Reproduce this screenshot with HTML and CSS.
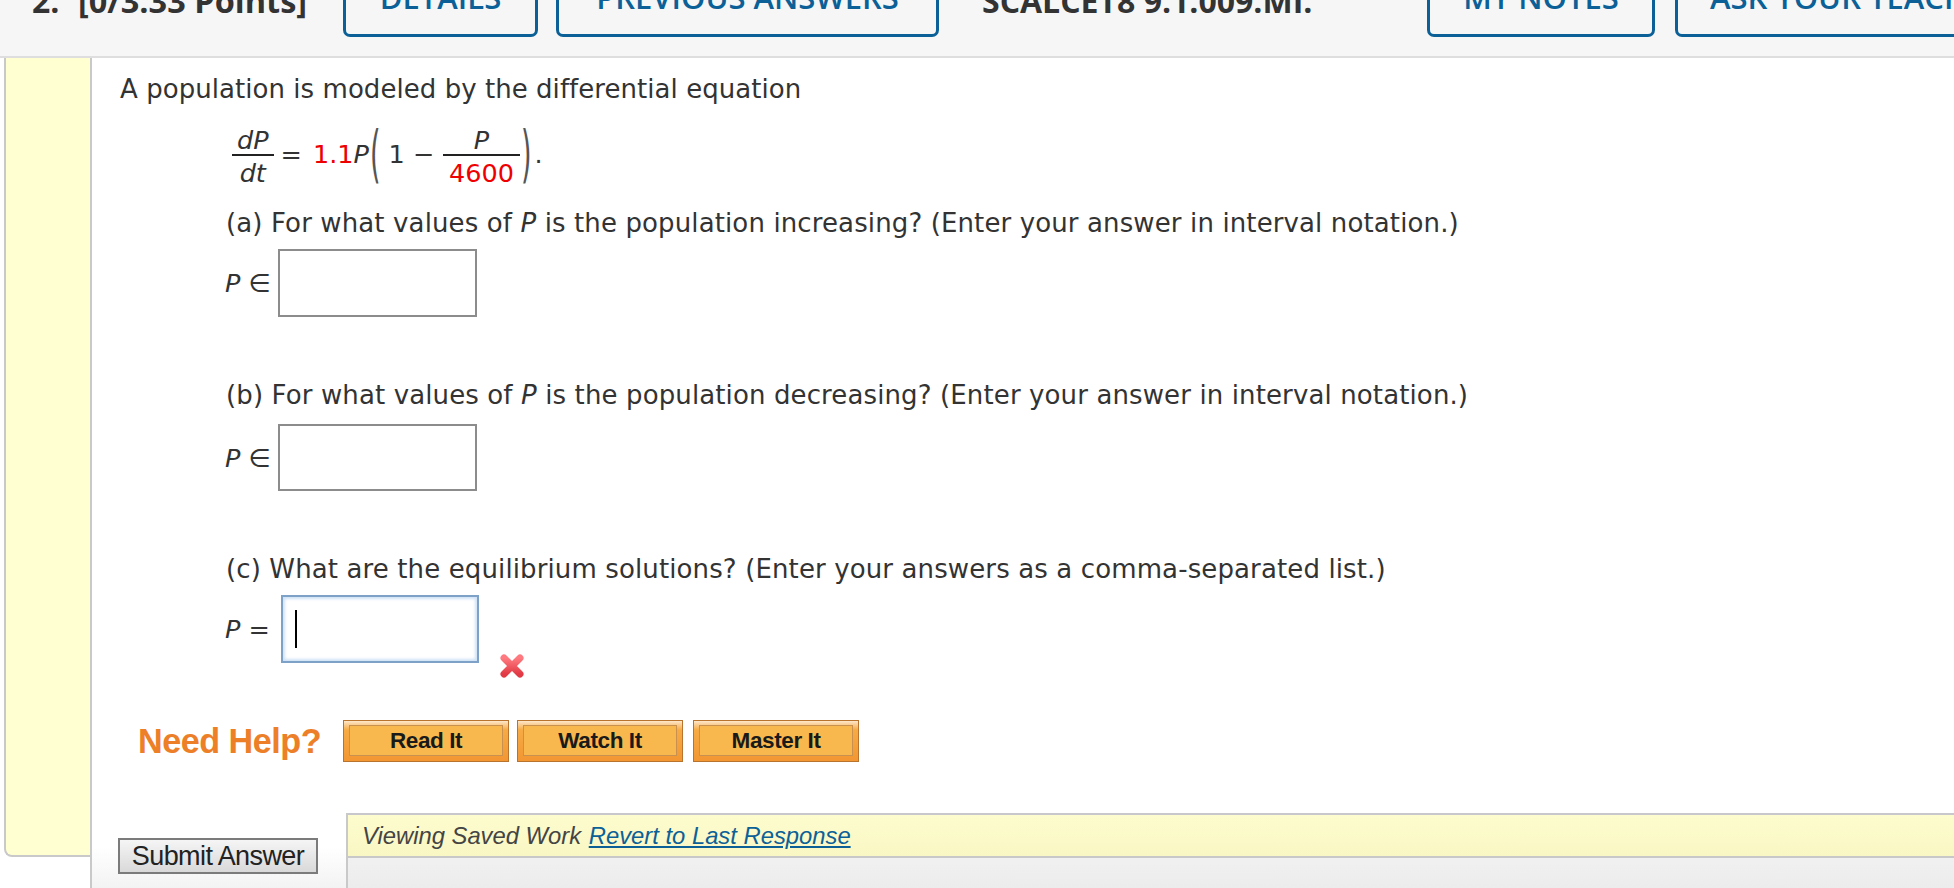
FILE: index.html
```html
<!DOCTYPE html>
<html lang="en">
<head>
<meta charset="utf-8">
<title>Question 2</title>
<link rel="stylesheet" href="styles.css">
</head>
<body>
<header class="qhead">
  <span class="qnum">2.</span>
  <span class="qpts">[0/3.33 Points]</span>
  <a class="hbtn hbtn-details">DETAILS</a>
  <a class="hbtn hbtn-prev">PREVIOUS ANSWERS</a>
  <span class="qref">SCALCET8 9.1.009.MI.</span>
  <a class="hbtn hbtn-notes">MY NOTES</a>
  <a class="hbtn hbtn-ask">ASK YOUR TEACHER</a>
</header>
<div class="qbody">
  <div class="gutter"></div>
  <main class="main">
    <div class="content">
      <p class="intro">A population is modeled by the differential equation</p>
      <div class="eq">
        <span class="frac frac-lhs"><span class="num"><i>dP</i></span><span class="den"><i>dt</i></span></span>
        <span class="t op-eq">=</span>
        <span class="t coef"><span class="red">1.1</span><i>P</i></span>
        <span class="paren paren-l">(</span>
        <span class="t one">1</span>
        <span class="t op-minus">−</span>
        <span class="frac frac-rhs"><span class="num"><i>P</i></span><span class="den red">4600</span></span>
        <span class="paren paren-r">)</span>
        <span class="t dot">.</span>
      </div>
      <p class="part part-a">(a) For what values of <i>P</i> is the population increasing? (Enter your answer in interval notation.)</p>
      <div class="ansrow ansrow-a">
        <span class="lbl"><i>P</i> ∈</span>
        <span class="box box-a"></span>
      </div>
      <p class="part part-b">(b) For what values of <i>P</i> is the population decreasing? (Enter your answer in interval notation.)</p>
      <div class="ansrow ansrow-b">
        <span class="lbl"><i>P</i> ∈</span>
        <span class="box box-b"></span>
      </div>
      <p class="part part-c">(c) What are the equilibrium solutions? (Enter your answers as a comma-separated list.)</p>
      <div class="ansrow ansrow-c">
        <span class="lbl"><i>P</i> =</span>
        <span class="box box-c"><span class="caret"></span></span>
        <svg class="wrong" width="26" height="26" viewBox="0 0 26 26" aria-label="incorrect">
          <defs>
            <linearGradient id="xg" x1="0" y1="0" x2="0" y2="1">
              <stop offset="0" stop-color="#ff7a80"/>
              <stop offset="1" stop-color="#e23a44"/>
            </linearGradient>
          </defs>
          <path d="M5 5 L21 21 M21 5 L5 21" stroke="url(#xg)" stroke-width="7" stroke-linecap="round" fill="none"/>
        </svg>
      </div>
      <div class="help">
        <span class="help-title">Need Help?</span>
        <a class="hbutton hb-read"><span>Read It</span></a>
        <a class="hbutton hb-watch"><span>Watch It</span></a>
        <a class="hbutton hb-master"><span>Master It</span></a>
      </div>
    </div>
    <div class="submitrow">
      <div class="submit-left">
        <span class="submit-btn">Submit Answer</span>
      </div>
      <div class="submit-right">
        <div class="saved">Viewing Saved Work <a class="revert">Revert to Last Response</a></div>
      </div>
    </div>
  </main>
</div>
</body>
</html>
```

FILE: styles.css
```css
html, body {
  margin: 0;
  padding: 0;
}
body {
  width: 1954px;
  height: 888px;
  overflow: hidden;
  background: #ffffff;
  color: #333333;
  font-family: "DejaVu Sans", Verdana, sans-serif;
}

/* ---------- header ---------- */
.qhead {
  display: flex;
  align-items: flex-start;
  height: 56px;
  padding-left: 32px;
  background: #f6f6f6;
  border-bottom: 2px solid #dedede;
  overflow: hidden;
  font-family: "Open Sans", sans-serif;
}
.qnum, .qpts, .qref {
  flex-shrink: 0;
  font-weight: 700;
  font-size: 32px;
  line-height: 32px;
  margin-top: -15px;
  color: #333333;
  white-space: nowrap;
}
.qnum { width: 46px; }
.qpts { width: 265px; font-size: 32.5px; }
.qref { width: 488px; padding-left: 43px; box-sizing: border-box; }
.hbtn {
  flex-shrink: 0;
  box-sizing: border-box;
  height: 60px;
  margin-top: -23px;
  padding-top: 1px;
  border: 3px solid #0b6197;
  border-radius: 7px;
  color: #0b6197;
  font-weight: 600;
  font-size: 31px;
  line-height: 32px;
  text-align: center;
  white-space: nowrap;
}
.hbtn-details { width: 195px; }
.hbtn-prev { width: 383px; margin-left: 18px; }
.hbtn-notes { width: 228px; }
.hbtn-ask { width: 330px; margin-left: 20px; text-align: left; padding-left: 32px; }

/* ---------- body ---------- */
.qbody {
  display: flex;
  height: 830px;
}
.gutter {
  flex-shrink: 0;
  box-sizing: border-box;
  width: 86px;
  height: 799px;
  margin-left: 4px;
  background: #ffffd1;
  border-left: 2px solid #c9c9c9;
  border-bottom: 2px solid #c9c9c9;
  border-bottom-left-radius: 8px;
}
.main {
  flex: 1;
  display: flex;
  flex-direction: column;
  border-left: 2px solid #c9c9c9;
}
.content {
  padding: 16px 0 0 28px;
}
.intro, .part {
  margin: 0;
  font-size: 26px;
  letter-spacing: 0.05px;
  line-height: 30px;
  white-space: nowrap;
}
.part { letter-spacing: 0.12px; }

/* equation */
.eq {
  display: flex;
  align-items: flex-start;
  margin: 22px 0 0 112px;
  font-size: 25.5px;
  height: 61px;
}
.eq .t {
  margin-top: 14px;
  line-height: 28px;
}
.frac {
  display: inline-flex;
  flex-direction: column;
  align-items: stretch;
  text-align: center;
  line-height: 28px;
}
.frac .num {
  border-bottom: 2px solid #222;
  padding: 0 5px;
}
.frac .den {
  margin-top: 3px;
  padding: 0 5px;
}
.red { color: #ee0000; }
.op-eq { margin-left: 7px; }
.coef { margin-left: 11px; }
.paren {
  display: inline-block;
  margin-top: 14px;
  font-size: 27px;
  line-height: 28px;
  color: #555;
  transform: scaleY(2.3);
}
.paren-l { margin-left: 1px; }
.one { margin-left: 8px; }
.op-minus { margin-left: 8px; }
.frac-rhs { margin-left: 9px; }
.frac-rhs .num, .frac-rhs .den { padding: 0 6px; }
.paren-r { margin-left: 1px; }
.dot { margin-left: 3px; }

/* parts */
.part { margin-left: 106px; }
.part-a { margin-top: 21px; }
.part-b { margin-top: 63px; }
.part-c { margin-top: 63px; }
.ansrow {
  display: flex;
  align-items: center;
  margin-left: 105px;
  font-size: 25.5px;
}
.ansrow-a { margin-top: 11px; }
.ansrow-b { margin-top: 14px; }
.ansrow-c { margin-top: 11px; }
.lbl {
  white-space: nowrap;
  line-height: 30px;
}
.box {
  display: block;
  box-sizing: border-box;
  width: 199px;
  height: 68px;
  margin-left: 7px;
  border: 2px solid #8c8c8c;
  background: #fff;
}
.box-b { height: 67px; }
.box-c {
  width: 198px;
  margin-left: 11px;
  border-color: #7ea2c7;
  box-shadow: inset 0 0 3px 2px #cfe2f6;
  padding: 13px 0 0 12px;
}
.caret {
  display: block;
  width: 2px;
  height: 38px;
  background: #000;
}
.wrong {
  align-self: flex-end;
  margin-left: 20px;
  margin-bottom: -16px;
}

/* help */
.help {
  display: flex;
  align-items: center;
  margin: 57px 0 0 18px;
  height: 42px;
}
.help-title {
  font-family: "Liberation Sans", Arial, sans-serif;
  font-weight: 700;
  font-size: 34.2px;
  color: #ec7f27;
  letter-spacing: -0.5px;
  margin-right: 22px;
}
.hbutton {
  box-sizing: border-box;
  display: flex;
  width: 166px;
  height: 42px;
  padding: 4px 5px 5px;
  margin-right: 8px;
  border: 1px solid #b8742e;
  background: linear-gradient(to bottom, #fde7ca 0%, #f7ab45 22%, #f29632 100%);
}
.hb-watch { margin-right: 10px; }
.hbutton span {
  flex: 1;
  display: flex;
  align-items: center;
  justify-content: center;
  border: 1px solid #c8914f;
  background: #f9b84d;
  font-family: "Liberation Sans", Arial, sans-serif;
  font-weight: 700;
  font-size: 22.5px;
  color: #1a1a1a;
  letter-spacing: -0.4px;
}

/* submit */
.submitrow {
  display: flex;
  margin-top: 51px;
  height: 76px;
}
.submit-left {
  box-sizing: border-box;
  width: 254px;
  padding: 25px 0 0 26px;
  background: linear-gradient(to bottom, #ffffff 45%, #f3f3f3 100%);
}
.submit-btn {
  display: block;
  box-sizing: border-box;
  width: 200px;
  height: 36px;
  border: 2px solid #7b7b7b;
  background: linear-gradient(to bottom, #f5f5f5, #d9d9d9);
  font-family: "Liberation Sans", Arial, sans-serif;
  font-size: 27px;
  line-height: 32px;
  text-align: center;
  color: #222;
  letter-spacing: -0.6px;
}
.submit-right {
  flex: 1;
  border-left: 2px solid #c9c9c9;
  background: linear-gradient(to bottom, #f7f7f7, #ececec);
}
.saved {
  height: 41px;
  padding-left: 14px;
  border-top: 2px solid #c8c8cc;
  border-bottom: 2px solid #c8c8c8;
  background: linear-gradient(to bottom, #fdfcce, #f9f7c3);
  font-family: "Liberation Sans", Arial, sans-serif;
  font-style: italic;
  font-size: 23.8px;
  line-height: 41px;
  color: #444;
  white-space: nowrap;
}
.revert {
  color: #0b6197;
  text-decoration: underline;
  margin-left: 1px;
}
```
